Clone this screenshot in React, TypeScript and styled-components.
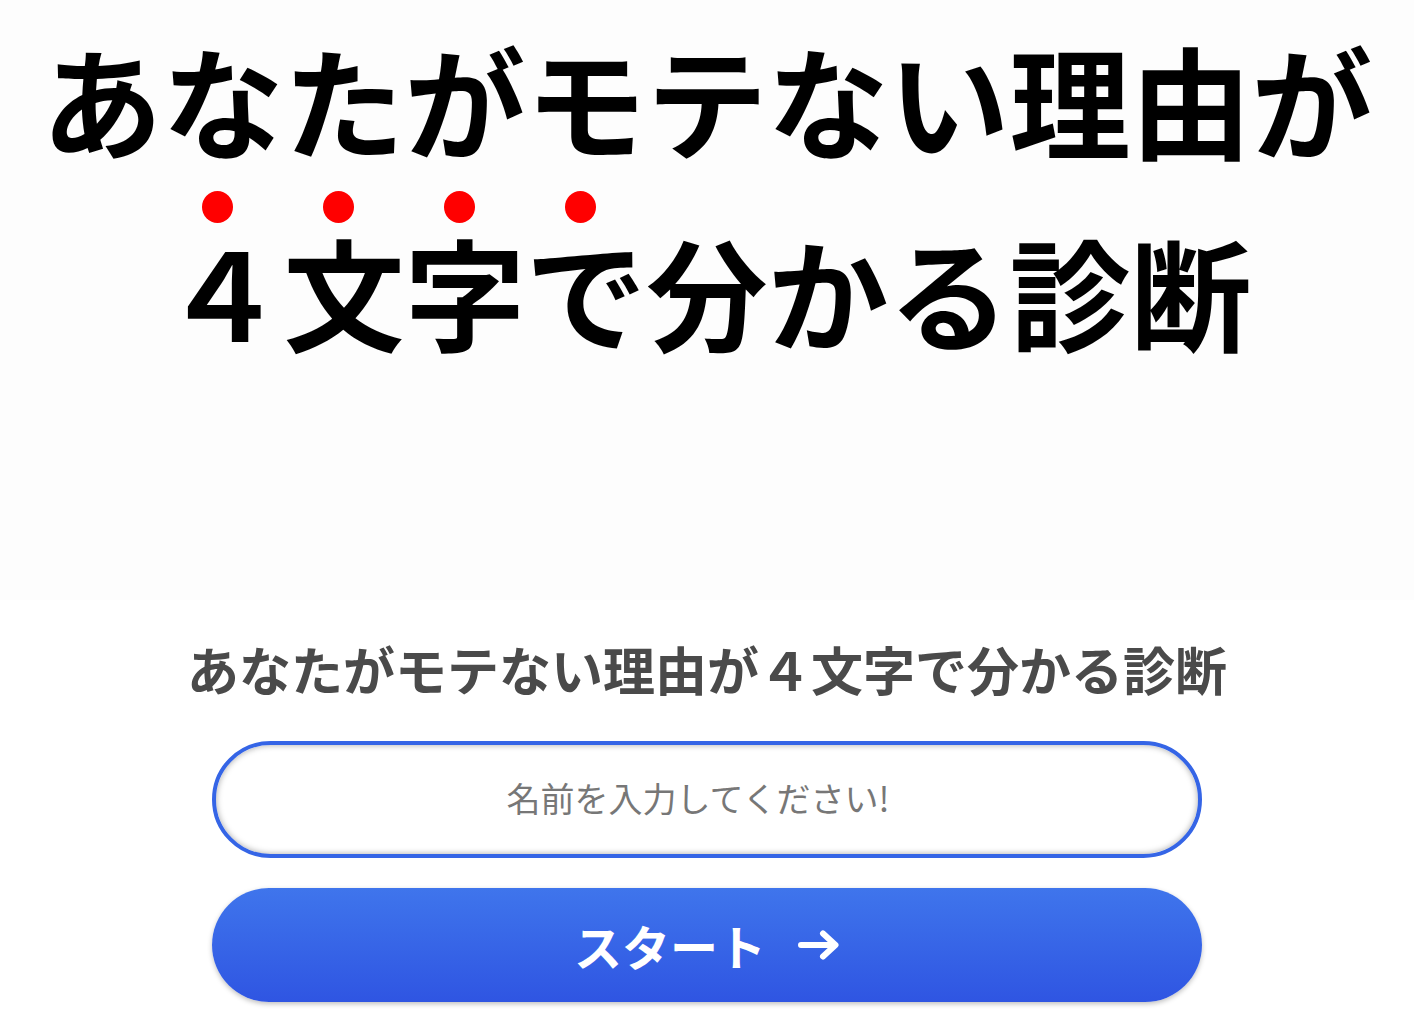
import React from 'react';
import styled, { createGlobalStyle } from 'styled-components';

const GlobalStyle = createGlobalStyle`
  html, body {
    margin: 0;
    padding: 0;
    background: #ffffff;
  }
  body {
    font-family: "Noto Sans CJK JP", "Noto Sans", sans-serif;
  }
`;

const Page = styled.div`
  width: 100%;
  min-height: 100vh;
  display: flex;
  flex-direction: column;
  align-items: center;
`;

const Hero = styled.header`
  width: 100%;
  height: 600px;
  background: #fdfdfd;
  display: flex;
  flex-direction: column;
  align-items: center;
  padding-top: 38px;
  box-sizing: border-box;
`;

const HeroLine = styled.div<{ $gap?: number }>`
  font-size: 121px;
  line-height: 120px;
  font-weight: 700;
  color: #000;
  white-space: nowrap;
  margin-top: ${(p) => p.$gap ?? 0}px;
`;

// red emphasis dot over each stressed character
const Dotted = styled.span`
  position: relative;
  &::before {
    content: '';
    position: absolute;
    left: 50%;
    top: -11px;
    width: 31px;
    height: 32px;
    margin-left: -21px;
    border-radius: 50%;
    background: #ff0000;
  }
`;

const Form = styled.section`
  width: 990px;
  display: flex;
  flex-direction: column;
  align-items: center;
  padding-top: 33px;
`;

const Title = styled.h1`
  margin: 0;
  font-size: 52px;
  line-height: 72px;
  font-weight: 700;
  color: #4a4a4a;
  white-space: nowrap;
`;

const NameInput = styled.input`
  width: 100%;
  height: 117px;
  margin-top: 36px;
  padding: 0 18px 4px 0;
  box-sizing: border-box;
  border: 4px solid #3565e6;
  border-radius: 60px;
  box-shadow: inset 0 0 6px rgba(0, 0, 0, 0.35);
  background: #fff;
  text-align: center;
  font-family: inherit;
  font-size: 34px;
  color: #333;
  outline: none;
  &::placeholder {
    color: #777;
  }
`;

const StartButton = styled.button`
  width: 100%;
  height: 114px;
  margin-top: 30px;
  border: none;
  border-radius: 60px;
  background: linear-gradient(180deg, #3f75ec 0%, #2f55e2 100%);
  box-shadow: 0 2px 5px rgba(0, 0, 0, 0.25);
  color: #fff;
  font-family: inherit;
  font-size: 48px;
  font-weight: 700;
  display: flex;
  align-items: center;
  justify-content: center;
  gap: 32px;
  cursor: pointer;
`;

const Arrow = () => (
  <svg width="42" height="30" viewBox="0 0 42 30" fill="none">
    <path
      d="M3 15H37M25 3.5L37.5 15L25 26.5"
      stroke="#fff"
      strokeWidth="6"
      strokeLinecap="round"
      strokeLinejoin="round"
    />
  </svg>
);

const App = () => {
  return (
    <Page>
      <GlobalStyle />
      <Hero>
        <HeroLine>あなたがモテない理由が</HeroLine>
        <HeroLine $gap={72}>
          <Dotted>４</Dotted>
          <Dotted>文</Dotted>
          <Dotted>字</Dotted>
          <Dotted>で</Dotted>分かる診断
        </HeroLine>
      </Hero>
      <Form>
        <Title>あなたがモテない理由が４文字で分かる診断</Title>
        <NameInput type="text" placeholder="名前を入力してください!" />
        <StartButton>
          <span>スタート</span>
          <Arrow />
        </StartButton>
      </Form>
    </Page>
  );
};

export default App;
